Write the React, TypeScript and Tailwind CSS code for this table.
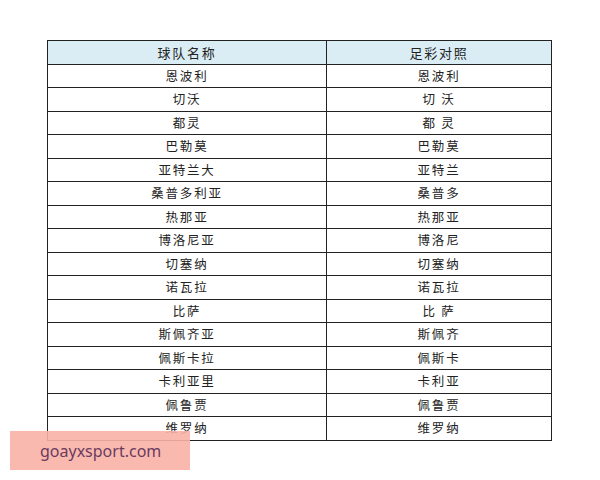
import React from "react";

const rows: [string, string][] = [
  ["恩波利", "恩波利"],
  ["切沃", "切 沃"],
  ["都灵", "都 灵"],
  ["巴勒莫", "巴勒莫"],
  ["亚特兰大", "亚特兰"],
  ["桑普多利亚", "桑普多"],
  ["热那亚", "热那亚"],
  ["博洛尼亚", "博洛尼"],
  ["切塞纳", "切塞纳"],
  ["诺瓦拉", "诺瓦拉"],
  ["比萨", "比 萨"],
  ["斯佩齐亚", "斯佩齐"],
  ["佩斯卡拉", "佩斯卡"],
  ["卡利亚里", "卡利亚"],
  ["佩鲁贾", "佩鲁贾"],
  ["维罗纳", "维罗纳"],
];

const font = {
  fontFamily: '"Noto Sans CJK SC", "Noto Sans", sans-serif',
};

export default function App() {
  return (
    <div className="relative w-[600px] h-[480px] bg-white" style={font}>
      <div className="pt-[40px] pl-[47px]">
        <table className="border-collapse w-[505px] text-[#222] text-[12.5px] tracking-[1.8px]">
          <thead>
            <tr className="h-[23.5px] bg-[#dbedf4]">
              <th className="border border-[#222] w-[279px] font-normal text-[13px] p-0 leading-none">球队名称</th>
              <th className="border border-[#222] font-normal text-[13px] p-0 leading-none">足彩对照</th>
            </tr>
          </thead>
          <tbody>
            {rows.map(([a, b], i) => (
              <tr key={i} className="h-[23.5px]">
                <td className="border border-[#222] text-center p-0 leading-none whitespace-pre">{a}</td>
                <td className="border border-[#222] text-center p-0 leading-none whitespace-pre">{b}</td>
              </tr>
            ))}
          </tbody>
        </table>
      </div>
      <div className="absolute left-[10px] top-[431px] w-[180px] h-[39px] bg-[#f8b1a6]/90 flex items-center pl-[30px]">
        <span
          className="text-[16px] text-[#6b3b5e] leading-none"
          style={{ fontFamily: '"Noto Sans", "Open Sans", sans-serif' }}
        >
          goayxsport.com
        </span>
      </div>
    </div>
  );
}
